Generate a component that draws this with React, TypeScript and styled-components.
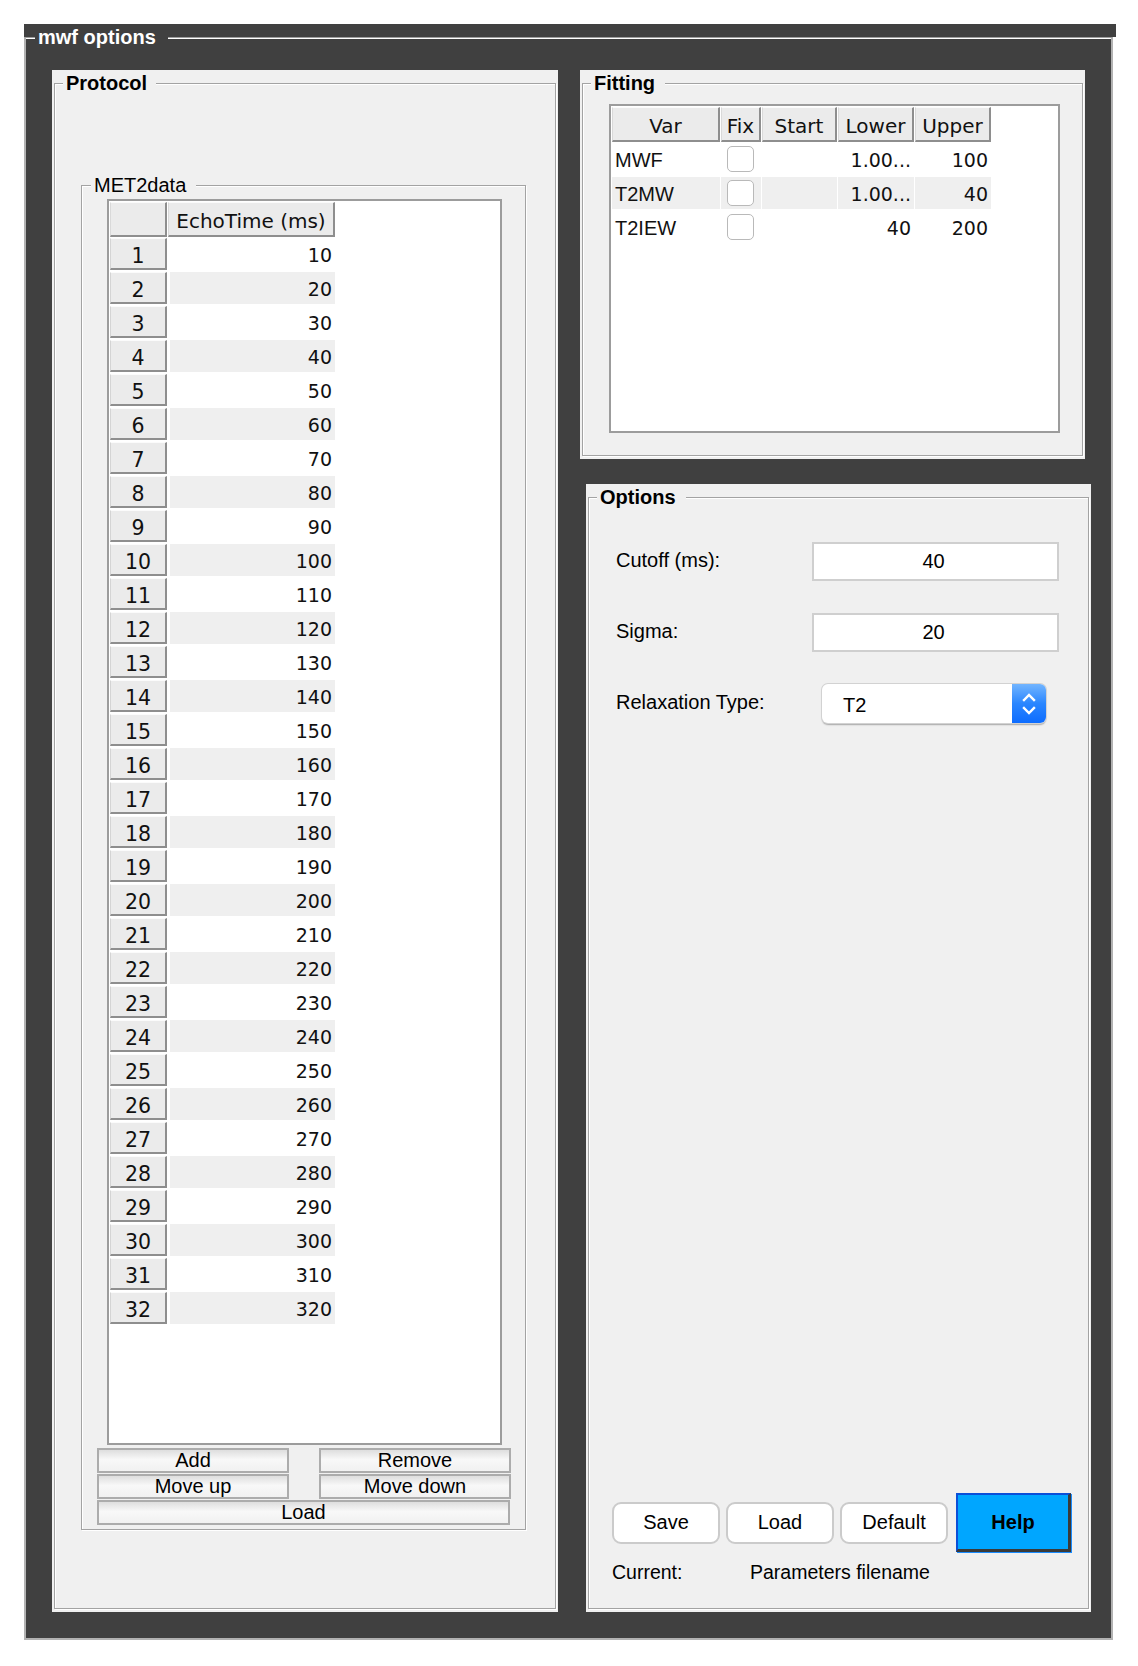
import React from "react";
import styled, { createGlobalStyle } from "styled-components";

const GlobalStyle = createGlobalStyle`
  html, body { margin: 0; padding: 0; background: #ffffff; }
  body { font-family: "Liberation Sans", Arial, Helvetica, sans-serif; color: #000; }
  * { box-sizing: border-box; }
`;

const SANS = `"Liberation Sans", Arial, Helvetica, sans-serif`;
const TABLE_FONT = `"DejaVu Sans", "Lucida Grande", Verdana, sans-serif`;

const Page = styled.div`
  padding: 24px 0 0 24px;
`;

const Frame = styled.div`
  width: 1092px;
  display: flex;
  flex-direction: column;
`;

const FrameStrip = styled.div`
  height: 13px;
  background: #404040;
`;

const FrameBox = styled.div`
  width: 1089px;
  height: 1603px;
  background: #404040;
  border: 2px solid #b2b2b2;
  border-top: 1px solid #9c9c9c;
  box-shadow: inset 0 1px 0 #ffffff;
  padding: 0;
  display: flex;
  flex-direction: column;
`;

const GroupTitle = styled.div<{ $bold?: boolean; $dark?: boolean; $ml?: number; $pr?: number }>`
  align-self: flex-start;
  margin: -12px 0 0 ${(p) => p.$ml ?? 8}px;
  padding: 0 ${(p) => p.$pr ?? 10}px 0 3px;
  background: ${(p) => (p.$dark ? "#404040" : "#f0f0f0")};
  color: ${(p) => (p.$dark ? "#ffffff" : "#000000")};
  font-family: ${SANS};
  font-size: 20px;
  line-height: 22px;
  font-weight: ${(p) => (p.$bold ? 700 : 400)};
  white-space: nowrap;
`;

const Columns = styled.div`
  margin: 22px 0 0 26px;
  display: grid;
  grid-template-columns: 506px 511px;
  column-gap: 22px;
  height: 1542px;
`;

const RightColumn = styled.div`
  display: flex;
  flex-direction: column;
  gap: 25px;
`;

const Panel = styled.section<{ $h: number; $w?: number; $ml?: number }>`
  width: ${(p) => (p.$w ? `${p.$w}px` : "auto")};
  height: ${(p) => p.$h}px;
  margin-left: ${(p) => p.$ml ?? 0}px;
  background: #f0f0f0;
  padding: 13px 2px 3px 2px;
  display: flex;
`;

const Group = styled.div`
  flex: 1;
  display: flex;
  flex-direction: column;
  border: 1px solid #a3a3a3;
  box-shadow: 1px 1px 0 #ffffff, inset 1px 1px 0 #ffffff;
`;

const SubGroup = styled.div`
  margin: 91px 0 0 26px;
  width: 445px;
  height: 1345px;
  display: flex;
  flex-direction: column;
  border: 1px solid #a3a3a3;
  box-shadow: 1px 1px 0 #ffffff, inset 1px 1px 0 #ffffff;
`;

const TableBox = styled.div<{ $w: number; $h: number; $mt: number; $ml: number }>`
  width: ${(p) => p.$w}px;
  height: ${(p) => p.$h}px;
  margin: ${(p) => p.$mt}px 0 0 ${(p) => p.$ml}px;
  border: 2px solid #9c9c9c;
  background: #ffffff;
  padding: 1px;
  overflow: hidden;
`;

const TableGrid = styled.div<{ $cols: string; $gap: number }>`
  display: grid;
  grid-template-columns: ${(p) => p.$cols};
  column-gap: ${(p) => p.$gap}px;
`;

const HeaderRow = styled(TableGrid)`
  margin-bottom: 1px;
`;

const HeadCell = styled.div`
  height: 35px;
  background: #ebebeb;
  border-top: 1px solid #fbfbfb;
  border-left: 1px solid #d9d9d9;
  border-right: 2px solid #8e8e8e;
  border-bottom: 2px solid #8e8e8e;
  font-family: ${TABLE_FONT};
  font-size: 20px;
  line-height: 36px;
  text-align: center;
  color: #111;
  white-space: nowrap;
  overflow: hidden;
`;

const RowHead = styled.div`
  height: 32px;
  margin-bottom: 2px;
  background: #ebebeb;
  border-top: 1px solid #fbfbfb;
  border-left: 1px solid #d4d4d4;
  border-right: 2px solid #8e8e8e;
  border-bottom: 2px solid #8e8e8e;
  font-family: ${TABLE_FONT};
  font-size: 20.5px;
  line-height: 34px;
  text-align: center;
  color: #111;
`;

const DataCell = styled.div<{ $alt: boolean; $align?: "left" | "right" | "center"; $font?: "table" | "sans" }>`
  height: 32px;
  margin-bottom: 2px;
  background: ${(p) => (p.$alt ? "#efefef" : "#ffffff")};
  font-family: ${(p) => (p.$font === "sans" ? SANS : TABLE_FONT)};
  font-size: ${(p) => (p.$font === "sans" ? 20 : 19)}px;
  line-height: 35px;
  text-align: ${(p) => p.$align ?? "right"};
  padding: 0 3px 0 3px;
  color: #111;
  white-space: nowrap;
  overflow: hidden;
  display: ${(p) => (p.$align === "center" ? "flex" : "block")};
  justify-content: center;
  align-items: center;
`;

const Check = styled.span`
  display: block;
  width: 27px;
  height: 26px;
  margin-left: -2px;
  border: 1.5px solid #b9b9b9;
  border-radius: 5px;
  background: #ffffff;
`;

const ButtonGrid = styled.div`
  margin: 3px 0 0 15px;
  display: grid;
  grid-template-columns: 192px 192px;
  column-gap: 30px;
  row-gap: 1px;
`;

const ListButton = styled.button<{ $span?: boolean }>`
  grid-column: ${(p) => (p.$span ? "1 / span 2" : "auto")};
  width: ${(p) => (p.$span ? "413px" : "auto")};
  height: 25px;
  margin: 0;
  padding: 0 0 3px 0;
  border: 2px solid #acacac;
  border-radius: 0;
  background: linear-gradient(#dedede 0%, #f8f8f8 45%, #f1f1f1 100%);
  font-family: ${SANS};
  font-size: 20px;
  line-height: 20px;
  color: #000;
`;

const FormGrid = styled.div`
  margin: 34px 0 0 27px;
  display: grid;
  grid-template-columns: 196px 247px;
  grid-auto-rows: 39px;
  row-gap: 32px;
  align-items: center;
`;

const Label = styled.span`
  margin-bottom: 4px;
  font-family: ${SANS};
  font-size: 20px;
  line-height: 22px;
  color: #000;
`;

const NumberField = styled.input`
  width: 247px;
  height: 39px;
  border: 2px solid #cfcfcf;
  background: #ffffff;
  text-align: center;
  font-family: ${SANS};
  font-size: 20px;
  color: #000;
  padding: 0 4px 0 0;
  outline: none;
`;

const Select = styled.div`
  margin-left: 10px;
  width: 224px;
  height: 39px;
  display: flex;
  border-radius: 6px;
  background: #ffffff;
  box-shadow: 0 0 0 1px #d2d2d2, 0 1.5px 1.5px rgba(0, 0, 0, 0.3);
  overflow: hidden;
`;

const SelectValue = styled.span`
  flex: 1;
  padding: 4px 0 0 21px;
  display: flex;
  align-items: center;
  font-family: ${SANS};
  font-size: 20px;
  color: #000;
`;

const SelectArrow = styled.span`
  width: 34px;
  display: flex;
  align-items: center;
  justify-content: center;
  background: linear-gradient(#72b5ff 0%, #2a86ff 50%, #0d6cff 100%);
`;

const BottomArea = styled.div`
  margin-top: auto;
  padding: 0 0 25px 23px;
  display: flex;
  flex-direction: column;
`;

const ButtonRow = styled.div`
  display: flex;
  align-items: center;
  gap: 6px;
`;

const RoundButton = styled.button<{ $w: number }>`
  width: ${(p) => p.$w}px;
  height: 42px;
  margin: 0;
  padding: 0;
  border: 2px solid #cbcbcb;
  border-radius: 9px;
  background: #ffffff;
  font-family: ${SANS};
  font-size: 20px;
  color: #000;
`;

const HelpButton = styled.button`
  width: 115px;
  height: 59px;
  margin: 0 0 0 2px;
  padding: 0;
  border-style: solid;
  border-width: 2px 3px 3px 2px;
  border-color: #0b4fd8 #3a3a3a #3a3a3a #0b4fd8;
  border-radius: 0;
  background: #00a6ff;
  box-shadow: 1px 1px 0 #1a8cff;
  font-family: ${SANS};
  font-weight: 700;
  font-size: 20px;
  color: #000;
`;

const CurrentRow = styled.div`
  margin-top: 9px;
  display: grid;
  grid-template-columns: 138px auto;
  font-family: ${SANS};
  font-size: 19.5px;
  line-height: 22px;
  color: #000;
`;

const Chevrons = () => (
  <svg width="16" height="26" viewBox="0 0 16 26" fill="none">
    <path d="M3 9 L8 4 L13 9" stroke="#ffffff" strokeWidth="2.4" strokeLinecap="square" />
    <path d="M3 17 L8 22 L13 17" stroke="#ffffff" strokeWidth="2.4" strokeLinecap="square" />
  </svg>
);

const echoTimes = Array.from({ length: 32 }, (_, i) => (i + 1) * 10);

const fittingRows = [
  { name: "MWF", lower: "1.00...", upper: "100" },
  { name: "T2MW", lower: "1.00...", upper: "40" },
  { name: "T2IEW", lower: "40", upper: "200" },
];

const FIT_COLS = "108px 40px 75px 76px 76px";

export default function App() {
  return (
    <>
      <GlobalStyle />
      <Page>
        <Frame>
          <FrameStrip />
          <FrameBox>
            <GroupTitle $bold $dark $ml={9} $pr={12}>
              mwf options
            </GroupTitle>
            <Columns>
              <Panel $h={1542}>
                <Group>
                  <GroupTitle $bold $pr={9}>
                    Protocol
                  </GroupTitle>
                  <SubGroup>
                    <GroupTitle $ml={9} $pr={10}>
                      MET2data
                    </GroupTitle>
                    <TableBox $w={395} $h={1246} $mt={3} $ml={25}>
                      <HeaderRow $cols="57px 167px" $gap={1}>
                        <HeadCell />
                        <HeadCell>EchoTime (ms)</HeadCell>
                      </HeaderRow>
                      <TableGrid $cols="57px 165px" $gap={3}>
                        {echoTimes.map((t, i) => (
                          <React.Fragment key={t}>
                            <RowHead>{i + 1}</RowHead>
                            <DataCell $alt={i % 2 === 1}>{t}</DataCell>
                          </React.Fragment>
                        ))}
                      </TableGrid>
                    </TableBox>
                    <ButtonGrid>
                      <ListButton>Add</ListButton>
                      <ListButton>Remove</ListButton>
                      <ListButton>Move up</ListButton>
                      <ListButton>Move down</ListButton>
                      <ListButton $span>Load</ListButton>
                    </ButtonGrid>
                  </SubGroup>
                </Group>
              </Panel>
              <RightColumn>
                <Panel $h={389} $w={505}>
                  <Group>
                    <GroupTitle $bold $pr={10}>
                      Fitting
                    </GroupTitle>
                    <TableBox $w={451} $h={329} $mt={10} $ml={26}>
                      <HeaderRow $cols={FIT_COLS} $gap={1}>
                        <HeadCell>Var</HeadCell>
                        <HeadCell>Fix</HeadCell>
                        <HeadCell>Start</HeadCell>
                        <HeadCell>Lower</HeadCell>
                        <HeadCell>Upper</HeadCell>
                      </HeaderRow>
                      <TableGrid $cols={FIT_COLS} $gap={1}>
                        {fittingRows.map((r, i) => (
                          <React.Fragment key={r.name}>
                            <DataCell $alt={i % 2 === 1} $align="left" $font="sans">
                              {r.name}
                            </DataCell>
                            <DataCell $alt={i % 2 === 1} $align="center">
                              <Check />
                            </DataCell>
                            <DataCell $alt={i % 2 === 1} />
                            <DataCell $alt={i % 2 === 1}>{r.lower}</DataCell>
                            <DataCell $alt={i % 2 === 1}>{r.upper}</DataCell>
                          </React.Fragment>
                        ))}
                      </TableGrid>
                    </TableBox>
                  </Group>
                </Panel>
                <Panel $h={1128} $w={505} $ml={6}>
                  <Group>
                    <GroupTitle $bold $pr={10}>
                      Options
                    </GroupTitle>
                    <FormGrid>
                      <Label>Cutoff (ms):</Label>
                      <NumberField readOnly value="40" />
                      <Label>Sigma:</Label>
                      <NumberField readOnly value="20" />
                      <Label>Relaxation Type:</Label>
                      <Select>
                        <SelectValue>T2</SelectValue>
                        <SelectArrow>
                          <Chevrons />
                        </SelectArrow>
                      </Select>
                    </FormGrid>
                    <BottomArea>
                      <ButtonRow>
                        <RoundButton $w={108}>Save</RoundButton>
                        <RoundButton $w={108}>Load</RoundButton>
                        <RoundButton $w={108}>Default</RoundButton>
                        <HelpButton>Help</HelpButton>
                      </ButtonRow>
                      <CurrentRow>
                        <span>Current:</span>
                        <span>Parameters filename</span>
                      </CurrentRow>
                    </BottomArea>
                  </Group>
                </Panel>
              </RightColumn>
            </Columns>
          </FrameBox>
        </Frame>
      </Page>
    </>
  );
}
